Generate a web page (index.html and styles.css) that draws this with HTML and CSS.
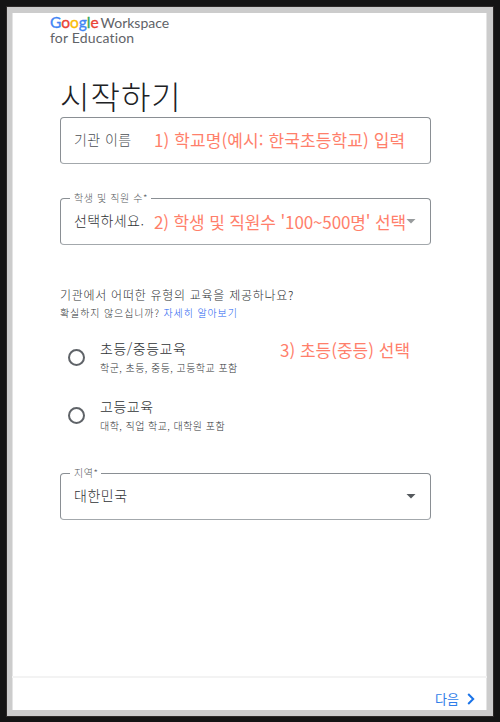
FILE: index.html
```
<!DOCTYPE html>
<html lang="ko">
<head>
<meta charset="utf-8">
<title>Google Workspace for Education</title>
<link rel="stylesheet" href="styles.css">
</head>
<body>
<div class="window">
  <header class="brand">
    <div class="brand-line"><span class="google"><span class="b">G</span><span class="r">o</span><span class="y">o</span><span class="b">g</span><span class="g">l</span><span class="r">e</span></span><span class="product">Workspace</span></div>
    <div class="brand-line edition">for Education</div>
  </header>
  <main class="form">
    <h1 class="title">시작하기</h1>
    <div class="field first">
      <span class="placeholder">기관 이름</span>
      <span class="note note-name">1) 학교명(예시: 한국초등학교) 입력</span>
    </div>
    <div class="field second">
      <span class="label label-size">학생 및 직원 수*</span>
      <span class="value choose">선택하세요.</span>
      <svg class="arrow faded" viewBox="0 0 10 5"><path d="M0.5 0h9L5 4.5z"/></svg>
      <span class="note note-size">2) 학생 및 직원수 '100~500명' 선택</span>
    </div>
    <section class="question">
      <p class="ask">기관에서 어떠한 유형의 교육을 제공하나요?</p>
      <p class="hint">확실하지 않으십니까? <a class="link">자세히 알아보기</a></p>
      <div class="option">
        <span class="radio"></span>
        <div class="copy"><div class="name">초등/중등교육</div><div class="desc">학군, 초등, 중등, 고등학교 포함</div></div>
        <span class="note note-type">3) 초등(중등) 선택</span>
      </div>
      <div class="option">
        <span class="radio"></span>
        <div class="copy"><div class="name">고등교육</div><div class="desc">대학, 직업 학교, 대학원 포함</div></div>
      </div>
    </section>
    <div class="field region">
      <span class="label">지역*</span>
      <span class="value country">대한민국</span>
      <svg class="arrow" viewBox="0 0 10 5"><path d="M0.5 0h9L5 4.5z"/></svg>
    </div>
  </main>
  <footer class="footer">
    <span class="next">다음</span>
    <svg class="chevron" viewBox="0 0 8 12"><path d="M1.2 1L6.2 6L1.2 11"/></svg>
  </footer>
</div>
</body>
</html>
```
FILE: styles.css
```
* { box-sizing: border-box; }
body {
  margin: 0;
  padding: 7px 7px 6px;
  height: 722px;
  background: #141414;
  font-family: "Noto Sans CJK KR", sans-serif;
  font-weight: 300;
  color: #303336;
  overflow: hidden;
}
.window {
  display: flex;
  flex-direction: column;
  height: 709px;
  background: #fff;
  border: 6px solid #ccc;
  border-left-width: 5px;
  outline: 1px solid #2d2a29;
  box-shadow: inset 1px 0 0 #e4e4e4, inset -1px 0 0 #e4e4e4;
}
.brand {
  padding: 2px 0 0 38px;
  height: 45px;
  font-family: Lato, sans-serif;
  font-size: 14px;
  font-weight: 400;
  color: #5f6368;
  white-space: nowrap;
}
.brand-line { display: flex; height: 15px; line-height: 15px; }
.google { width: 50.5px; font-size: 15.5px; -webkit-text-stroke: .35px currentColor; }
.google span { -webkit-text-stroke: .35px currentColor; }
.product { letter-spacing: 0; }
.edition { letter-spacing: .17px; }
.b { color: #4285f4; }
.r { color: #ea4335; }
.y { color: #fbbc04; }
.g { color: #34a853; }
.form { flex: 1; padding-left: 48px; }
.title {
  margin: 15px 0 0;
  height: 44px;
  line-height: 44px;
  font-size: 32px;
  font-weight: 300;
  letter-spacing: 1px;
  color: #202124;
}
.field {
  position: relative;
  display: flex;
  align-items: center;
  width: 371px;
  height: 47px;
  padding: 0 14px 3px 13px;
  border: 1px solid #8a8f94;
  border-bottom-color: #a3a8ac;
  border-radius: 4px;
  font-size: 14px;
  white-space: nowrap;
}
.second { margin-top: 34px; }
.placeholder { color: #4c5055; letter-spacing: .4px; }
.choose { letter-spacing: .4px; }
.country { letter-spacing: .5px; }
.label {
  position: absolute;
  left: 9px;
  top: -9px;
  padding: 0 3px 0 4px;
  height: 16px;
  line-height: 16px;
  background: #fff;
  font-size: 10px;
  letter-spacing: .5px;
  color: #55595d;
}
.label-size { letter-spacing: .6px; }
.arrow { width: 10px; height: 5px; margin: 3px 0 0 auto; fill: #55595d; }
.faded { opacity: .6; }
.note {
  position: absolute;
  line-height: 24px;
  font-size: 17px;
  font-weight: 400;
  color: #ff7f6b;
  white-space: nowrap;
}
.note-name { left: 93px; top: 10px; letter-spacing: .1px; }
.note-size { left: 93px; top: 11px; letter-spacing: -.13px; }
.note-type { left: 220px; top: 17px; }
.question { margin-top: 41px; white-space: nowrap; }
.ask, .hint { margin: 0; }
.ask { height: 18px; line-height: 18px; font-size: 12px; letter-spacing: .72px; }
.hint { height: 17px; line-height: 18px; font-size: 10px; letter-spacing: .88px; }
.link { color: #1a60f0; }
.option { position: relative; display: flex; height: 58px; padding-top: 17px; }
.radio { width: 17px; height: 17px; margin: 11px 15px 0 8px; border: 2px solid #5f6368; border-radius: 50%; }
.name { height: 20px; line-height: 20px; font-size: 14px; letter-spacing: .5px; }
.desc { height: 18px; line-height: 20px; font-size: 10px; letter-spacing: .45px; }
.region { margin-top: 36px; }
.footer {
  display: flex;
  align-items: center;
  justify-content: flex-end;
  height: 34px;
  padding: 9px 12px 0 0;
  border-top: 2px solid #f3f3f3;
  font-size: 13px;
  font-weight: 400;
  color: #2f7de9;
}
.chevron { width: 8px; height: 12px; margin-left: 8px; fill: none; stroke: #1a73e8; stroke-width: 2; }
```
